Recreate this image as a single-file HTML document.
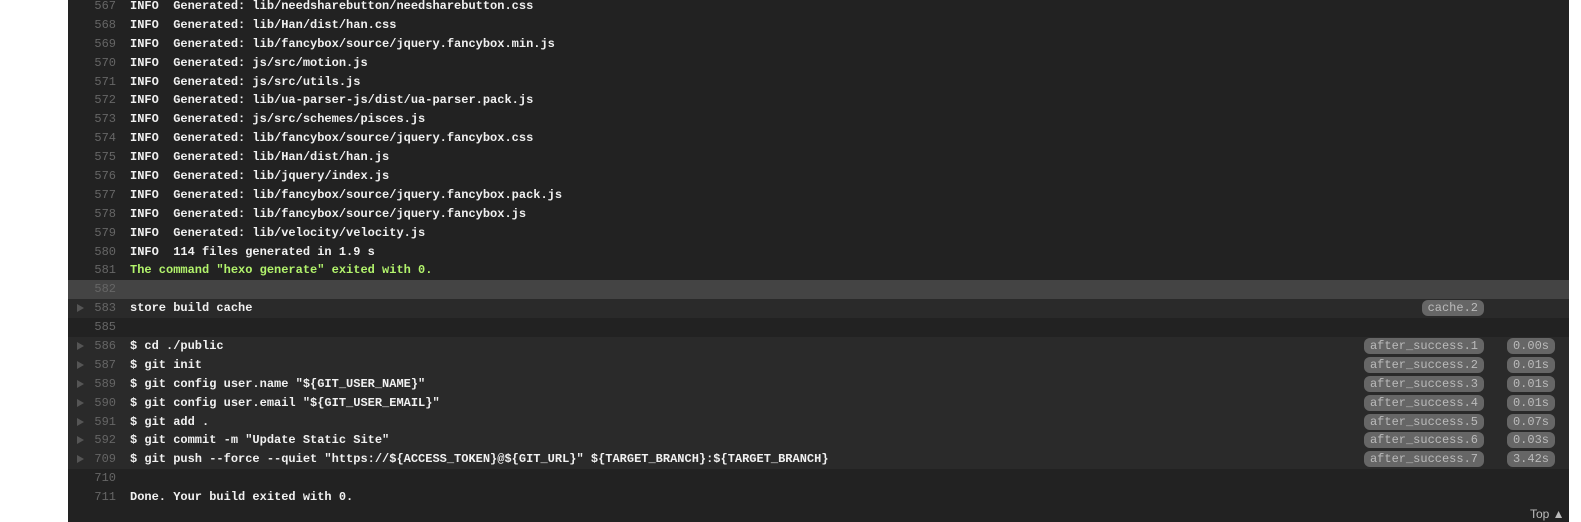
<!DOCTYPE html>
<html><head><meta charset="utf-8"><style>
body{margin:0;background:#fff;width:1581px;height:522px;overflow:hidden;position:relative;font-family:"Liberation Mono",monospace;}
#p{position:absolute;left:68px;top:0;width:1501px;height:522px;background:#222;}
#l{position:absolute;left:0;top:-3px;width:1501px;}
.r{height:18.9px;line-height:18.9px;position:relative;font-size:12px;color:#f1f1f1;font-weight:bold;white-space:pre;}
.r .n{position:absolute;left:0;width:48px;text-align:right;color:#666;font-weight:normal;}
.r .t{position:absolute;left:62px;}
.f{background:#2a2a2a;}
.h{background:#444;}
.a:before{content:"";position:absolute;left:9px;top:5px;border-left:7px solid #555;border-top:4px solid transparent;border-bottom:4px solid transparent;}
.g{color:#b2f36c;}
.b{position:absolute;top:1px;height:16px;line-height:16px;border-radius:6px;background:#666;color:#bbb;font-weight:normal;font-size:12px;padding:0 6px;}
.b1{right:85px;}
.b2{right:14px;}
#top{position:absolute;left:1530px;top:507px;color:#bbb;font-family:"Liberation Sans",sans-serif;font-size:12px;}
</style></head><body>
<div id="p"><div id="l">
<div class="r"><span class="n">567</span><span class="t">INFO  Generated: lib/needsharebutton/needsharebutton.css</span></div>
<div class="r"><span class="n">568</span><span class="t">INFO  Generated: lib/Han/dist/han.css</span></div>
<div class="r"><span class="n">569</span><span class="t">INFO  Generated: lib/fancybox/source/jquery.fancybox.min.js</span></div>
<div class="r"><span class="n">570</span><span class="t">INFO  Generated: js/src/motion.js</span></div>
<div class="r"><span class="n">571</span><span class="t">INFO  Generated: js/src/utils.js</span></div>
<div class="r"><span class="n">572</span><span class="t">INFO  Generated: lib/ua-parser-js/dist/ua-parser.pack.js</span></div>
<div class="r"><span class="n">573</span><span class="t">INFO  Generated: js/src/schemes/pisces.js</span></div>
<div class="r"><span class="n">574</span><span class="t">INFO  Generated: lib/fancybox/source/jquery.fancybox.css</span></div>
<div class="r"><span class="n">575</span><span class="t">INFO  Generated: lib/Han/dist/han.js</span></div>
<div class="r"><span class="n">576</span><span class="t">INFO  Generated: lib/jquery/index.js</span></div>
<div class="r"><span class="n">577</span><span class="t">INFO  Generated: lib/fancybox/source/jquery.fancybox.pack.js</span></div>
<div class="r"><span class="n">578</span><span class="t">INFO  Generated: lib/fancybox/source/jquery.fancybox.js</span></div>
<div class="r"><span class="n">579</span><span class="t">INFO  Generated: lib/velocity/velocity.js</span></div>
<div class="r"><span class="n">580</span><span class="t">INFO  114 files generated in 1.9 s</span></div>
<div class="r"><span class="n">581</span><span class="t g">The command "hexo generate" exited with 0.</span></div>
<div class="r h"><span class="n">582</span></div>
<div class="r f a"><span class="n">583</span><span class="t">store build cache</span><span class="b b1">cache.2</span></div>
<div class="r"><span class="n">585</span></div>
<div class="r f a"><span class="n">586</span><span class="t">$ cd ./public</span><span class="b b1">after_success.1</span><span class="b b2">0.00s</span></div>
<div class="r f a"><span class="n">587</span><span class="t">$ git init</span><span class="b b1">after_success.2</span><span class="b b2">0.01s</span></div>
<div class="r f a"><span class="n">589</span><span class="t">$ git config user.name "${GIT_USER_NAME}"</span><span class="b b1">after_success.3</span><span class="b b2">0.01s</span></div>
<div class="r f a"><span class="n">590</span><span class="t">$ git config user.email "${GIT_USER_EMAIL}"</span><span class="b b1">after_success.4</span><span class="b b2">0.01s</span></div>
<div class="r f a"><span class="n">591</span><span class="t">$ git add .</span><span class="b b1">after_success.5</span><span class="b b2">0.07s</span></div>
<div class="r f a"><span class="n">592</span><span class="t">$ git commit -m "Update Static Site"</span><span class="b b1">after_success.6</span><span class="b b2">0.03s</span></div>
<div class="r f a"><span class="n">709</span><span class="t">$ git push --force --quiet "https://${ACCESS_TOKEN}@${GIT_URL}" ${TARGET_BRANCH}:${TARGET_BRANCH}</span><span class="b b1">after_success.7</span><span class="b b2">3.42s</span></div>
<div class="r"><span class="n">710</span></div>
<div class="r"><span class="n">711</span><span class="t">Done. Your build exited with 0.</span></div>
</div></div>
<div id="top">Top &#9650;</div>
</body></html>
